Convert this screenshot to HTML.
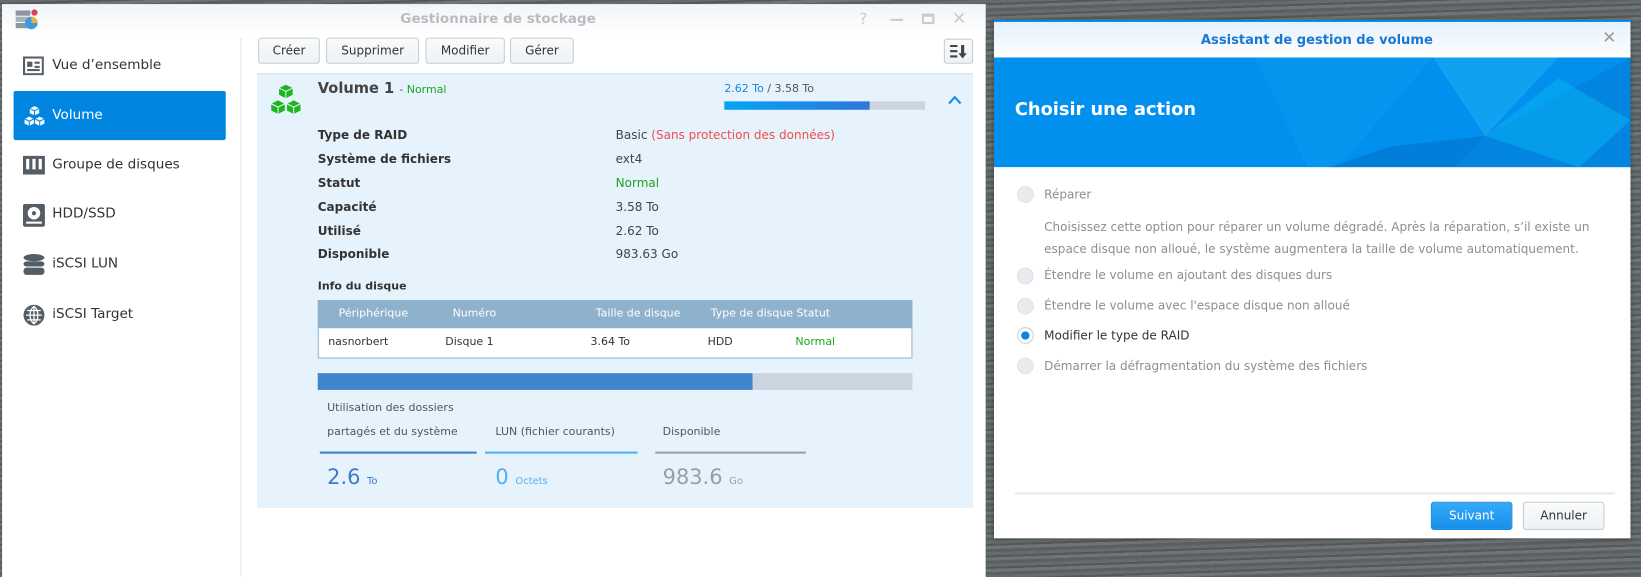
<!DOCTYPE html>
<html><head><meta charset="utf-8">
<style>
*{margin:0;padding:0;box-sizing:border-box}
html,body{width:1641px;height:577px;overflow:hidden;background:#5f6468}
#w{position:absolute;left:0;top:0;width:1570px;height:552px;transform:scale(1.0452,1.0453);transform-origin:0 0;font-family:"DejaVu Sans","Liberation Sans",sans-serif;font-size:11.5px;color:#444;
background:repeating-linear-gradient(178deg,#666b6e 0 3px,#53585b 3px 5px,#6f7477 5px 8px,#5a5f62 8px 11px)}
.a{position:absolute;white-space:nowrap}
.btn{position:absolute;top:36px;height:25px;border:1px solid #c5ccd3;border-radius:3px;background:linear-gradient(#f9fbfc,#eef2f5);font-size:11.5px;color:#333;text-align:center;line-height:23px}
.side{position:absolute;left:22px;font-size:13px;color:#333}
.lbl{position:absolute;left:304px;font-weight:bold;color:#333}
.val{position:absolute;left:589px;color:#444}
.radio{position:absolute;left:973px;width:16px;height:16px;border-radius:50%;background:#e8ecf0;border:1px solid #dde2e7}
.opt{position:absolute;left:999px;color:#8a8f94}
.s11{font-size:10.5px}
</style></head><body><div id="w">
<div class="a" style="left:2px;top:4px;width:941px;height:548px;background:#fff"></div>
<div class="a" style="left:2px;top:4px;width:941px;height:30px;background:linear-gradient(#f2f4f6,#fff)"></div>
<div class="a" style="left:14px;top:7px;width:22px;height:22px">
<svg width="22" height="22"><rect x="1" y="3" width="14" height="5" fill="#8a96a3"/><rect x="1" y="9" width="14" height="5" fill="#a6b0ba"/><rect x="1" y="15" width="14" height="5" fill="#8a96a3"/><circle cx="16" cy="15" r="6" fill="#3b9be0"/><path d="M16 15 L16 9 A6 6 0 0 1 22 15Z" fill="#f0b030"/><circle cx="19" cy="5" r="3" fill="#e04050"/></svg></div>
<div class="a" style="left:383px;top:11px;font-size:13px;font-weight:bold;color:#b9bdc2">Gestionnaire de stockage</div>
<div class="a" style="left:822px;top:9px;font-size:15px;color:#c8ccd0">?</div>
<div class="a" style="left:852px;top:18px;width:12px;height:2px;background:#c8ccd0"></div>
<div class="a" style="left:882px;top:13px;width:12px;height:10px;border:2px solid #c8ccd0;border-top-width:3px"></div>
<div class="a" style="left:911px;top:8px;font-size:16px;color:#c8ccd0">✕</div>
<div class="a" style="left:230px;top:36px;width:1px;height:516px;background:#e3e6e9"></div>
<svg class="a" style="left:22px;top:54px" width="20" height="18"><rect x="1" y="1" width="18" height="16" fill="none" stroke="#555d66" stroke-width="2"/><rect x="4" y="5" width="5" height="5" fill="#555d66"/><rect x="11" y="5" width="5" height="2" fill="#555d66"/><rect x="11" y="9" width="5" height="2" fill="#555d66"/><rect x="4" y="12" width="12" height="2" fill="#555d66"/></svg>
<div class="side" style="left:50px;top:55px">Vue d’ensemble</div>
<div class="a" style="left:13px;top:87px;width:203px;height:47px;background:#0086e0;border-radius:2px"></div>
<svg class="a" style="left:22px;top:100px" width="22" height="22"><g fill="#fff" stroke="#0086e0" stroke-width="1"><path d="M11 1l5 2.5v5l-5 2.5-5-2.5v-5z"/><path d="M6 11l5 2.5v5l-5 2.5-5-2.5v-5z"/><path d="M16 11l5 2.5v5l-5 2.5-5-2.5v-5z"/><path d="M6 3.5l5 2.5 5-2.5M11 6v5M1 13.5l5 2.5 5-2.5M6 16v5M11 13.5l5 2.5 5-2.5M16 16v5" fill="none"/></g></svg>
<div class="side" style="left:50px;top:103px;color:#fff">Volume</div>
<svg class="a" style="left:22px;top:149px" width="21" height="18"><rect width="21" height="18" fill="#555d66"/><rect x="3" y="3" width="3" height="10" fill="#fff"/><rect x="9" y="3" width="3" height="10" fill="#fff"/><rect x="15" y="3" width="3" height="10" fill="#fff"/></svg>
<div class="side" style="left:50px;top:150px">Groupe de disques</div>
<svg class="a" style="left:22px;top:195px" width="21" height="22"><rect width="21" height="22" rx="2" fill="#555d66"/><circle cx="10.5" cy="9" r="6" fill="#fff"/><circle cx="10.5" cy="9" r="2" fill="#555d66"/><rect x="3" y="17" width="15" height="2" fill="#fff"/></svg>
<div class="side" style="left:50px;top:197px">HDD/SSD</div>
<svg class="a" style="left:22px;top:243px" width="21" height="21" fill="#555d66"><ellipse cx="10.5" cy="3.5" rx="10" ry="3.5"/><rect x=".5" y="7" width="20" height="5" rx="3"/><rect x=".5" y="13" width="20" height="7" rx="3"/></svg>
<div class="side" style="left:50px;top:245px">iSCSI LUN</div>
<svg class="a" style="left:22px;top:291px" width="21" height="21"><circle cx="10.5" cy="10.5" r="10" fill="#555d66"/><path d="M10.5 2v17M3 10.5h15M4 6h13M4 15h13M10.5 2c-5 4-5 13 0 17M10.5 2c5 4 5 13 0 17" stroke="#fff" stroke-width="1.2" fill="none"/></svg>
<div class="side" style="left:50px;top:293px">iSCSI Target</div>
<div class="btn" style="left:247px;width:59px">Créer</div>
<div class="btn" style="left:312px;width:89px">Supprimer</div>
<div class="btn" style="left:407px;width:76px">Modifier</div>
<div class="btn" style="left:488px;width:61px">Gérer</div>
<div class="btn" style="left:903px;width:28px;top:37px;height:24px"><svg width="20" height="16" style="margin-top:3px"><path d="M2 3h7M2 8h7M2 13h7" stroke="#444" stroke-width="2"/><path d="M14 2v9" stroke="#444" stroke-width="3"/><path d="M10 10h8l-4 5z" fill="#444"/></svg></div>
<div class="a" style="left:246px;top:70px;width:685px;height:416px;background:#e6f3fd;border-top:1px solid #cfe0ee"></div>
<svg class="a" style="left:258px;top:80px" width="31" height="31"><g fill="#1db61d" stroke="#e6f3fd" stroke-width="1"><path d="M15.5 0.5l7 3.5v7l-7 3.5-7-3.5v-7z"/><path d="M8 15.5l7 3.5v7l-7 3.5-7-3.5v-7z"/><path d="M23 15.5l7 3.5v7l-7 3.5-7-3.5v-7z"/><path d="M8.5 4l7 3.5 7-3.5M15.5 7.5v7M1 19l7 3.5 7-3.5M8 22.5v7M16 19l7 3.5 7-3.5M23 22.5v7" fill="none"/></g></svg>
<div class="a" style="left:304px;top:77px;font-size:14px;font-weight:bold;color:#444">Volume 1 <span style="font-weight:normal;font-size:10.5px;color:#555">- </span><span style="font-weight:normal;font-size:10.5px;color:#1ea51e">Normal</span></div>
<div class="a s11" style="left:693px;top:79px;color:#555"><span style="color:#1a84d9">2.62 To</span> / 3.58 To</div>
<div class="a" style="left:693px;top:97px;width:192px;height:8px;background:#ccd5df"></div>
<div class="a" style="left:693px;top:97px;width:139px;height:8px;background:linear-gradient(90deg,#03a5f5,#2e76db)"></div>
<svg class="a" style="left:907px;top:91px" width="13" height="9"><path d="M1 8l5.5-6 5.5 6" stroke="#1a8ae0" stroke-width="2" fill="none"/></svg>
<div class="lbl" style="top:122px">Type de RAID</div><div class="val" style="top:122px">Basic <span style="color:#f24c4c">(Sans protection des données)</span></div>
<div class="lbl" style="top:145px">Système de fichiers</div><div class="val" style="top:145px">ext4</div>
<div class="lbl" style="top:168px">Statut</div><div class="val" style="top:168px;color:#1ea51e">Normal</div>
<div class="lbl" style="top:191px">Capacité</div><div class="val" style="top:191px">3.58 To</div>
<div class="lbl" style="top:214px">Utilisé</div><div class="val" style="top:214px">2.62 To</div>
<div class="lbl" style="top:236px">Disponible</div><div class="val" style="top:236px">983.63 Go</div>
<div class="a s11" style="left:304px;top:268px;font-weight:bold;color:#333">Info du disque</div>
<div class="a" style="left:304px;top:287px;width:569px;height:56px;border:1px solid #8fb2cc;background:#fff"></div>
<div class="a" style="left:304px;top:287px;width:569px;height:27px;background:#8fb2cc"></div>
<div class="a s11" style="top:294px;left:324px;color:#fff">Périphérique</div>
<div class="a s11" style="top:294px;left:433px;color:#fff">Numéro</div>
<div class="a s11" style="top:294px;left:570px;color:#fff">Taille de disque</div>
<div class="a s11" style="top:294px;left:680px;color:#fff">Type de disque Statut</div>
<div class="a s11" style="top:321px;left:314px;color:#333">nasnorbert</div>
<div class="a s11" style="top:321px;left:426px;color:#333">Disque 1</div>
<div class="a s11" style="top:321px;left:565px;color:#333">3.64 To</div>
<div class="a s11" style="top:321px;left:677px;color:#333">HDD</div>
<div class="a s11" style="top:321px;left:761px;color:#1ea51e">Normal</div>
<div class="a" style="left:304px;top:357px;width:569px;height:16px;background:#ccd5df"></div>
<div class="a" style="left:304px;top:357px;width:416px;height:16px;background:#3d86cd"></div>
<div class="a s11" style="left:313px;top:384px;color:#555">Utilisation des dossiers</div>
<div class="a s11" style="left:313px;top:407px;color:#555">partagés et du système</div>
<div class="a s11" style="left:474px;top:407px;color:#555">LUN (fichier courants)</div>
<div class="a s11" style="left:634px;top:407px;color:#555">Disponible</div>
<div class="a" style="left:306px;top:432px;width:150px;height:2px;background:#3d80cc"></div>
<div class="a" style="left:464px;top:432px;width:146px;height:2px;background:#52b0f2"></div>
<div class="a" style="left:627px;top:432px;width:144px;height:2px;background:#9aa0a8"></div>
<div class="a" style="left:313px;top:444px;font-size:20px;color:#3d7bc9">2.6 <span style="font-size:9.5px">To</span></div>
<div class="a" style="left:474px;top:444px;font-size:20px;color:#55aef0">0 <span style="font-size:9.5px">Octets</span></div>
<div class="a" style="left:634px;top:444px;font-size:20px;color:#9a9ea4">983.6 <span style="font-size:9.5px">Go</span></div>
<div class="a" style="left:951px;top:19px;width:609px;height:496px;background:#fff;border-top:2px solid #0086e0;box-shadow:0 0 4px rgba(0,0,0,.4)"></div>
<div class="a" style="left:951px;top:21px;width:609px;height:34px;background:linear-gradient(#e4f1fb,#fff)"></div>
<div class="a" style="left:1149px;top:30px;font-size:12.5px;font-weight:bold;color:#1a78d4">Assistant de gestion de volume</div>
<div class="a" style="left:1533px;top:26px;font-size:16px;color:#999">✕</div>
<svg class="a" style="left:951px;top:55px" width="609" height="105">
<rect width="609" height="105" fill="#0290ee"/>
<polygon points="250,0 420,0 330,105 300,105" fill="#0a9af0" opacity=".6"/>
<polygon points="420,0 540,0 470,75" fill="#1aa8f2" opacity=".7"/>
<polygon points="470,75 609,0 609,105 440,105" fill="#0382dc" opacity=".8"/>
<polygon points="470,75 540,20 609,60 560,105" fill="#08b4f4" opacity=".5"/>
<polygon points="380,85 470,75 440,105 320,105" fill="#0276d2" opacity=".7"/>
</svg>
<div class="a" style="left:971px;top:95px;font-size:17px;font-weight:bold;color:#fff">Choisir une action</div>
<div class="radio" style="top:178px"></div><div class="opt" style="top:179px">Réparer</div>
<div class="opt" style="top:207px;line-height:21px">Choisissez cette option pour réparer un volume dégradé. Après la réparation, s’il existe un<br>espace disque non alloué, le système augmentera la taille de volume automatiquement.</div>
<div class="radio" style="top:256px"></div><div class="opt" style="top:256px">Étendre le volume en ajoutant des disques durs</div>
<div class="radio" style="top:285px"></div><div class="opt" style="top:285px">Étendre le volume avec l'espace disque non alloué</div>
<div class="radio" style="top:313px;background:#fff;border:1px solid #c8d0d8"></div><div class="a" style="left:977px;top:317px;width:8px;height:8px;border-radius:50%;background:#0a84e8"></div>
<div class="opt" style="top:314px;color:#333">Modifier le type de RAID</div>
<div class="radio" style="top:342px"></div><div class="opt" style="top:343px">Démarrer la défragmentation du système des fichiers</div>
<div class="a" style="left:971px;top:471px;width:574px;height:2px;background:#e6e8ea"></div>
<div class="a" style="left:1369px;top:480px;width:78px;height:27px;border-radius:3px;border:1px solid #1a88e0;background:linear-gradient(#35aaf8,#1790ea);color:#fff;text-align:center;line-height:25px">Suivant</div>
<div class="a" style="left:1457px;top:480px;width:78px;height:27px;border-radius:3px;border:1px solid #c5ccd3;background:linear-gradient(#f9fbfc,#eef2f5);color:#333;text-align:center;line-height:25px">Annuler</div>
</div></body></html>
